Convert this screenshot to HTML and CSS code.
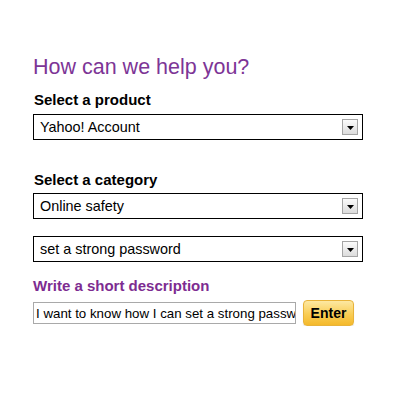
FILE: index.html
```html
<!DOCTYPE html>
<html lang="en">
<head>
<meta charset="utf-8">
<title>How can we help you?</title>
<link rel="stylesheet" href="styles.css">
</head>
<body>
<main class="help">
  <h1 class="title">How can we help you?</h1>

  <h2 class="label">Select a product</h2>
  <div class="select">
    <span class="select-value">Yahoo! Account</span>
    <span class="select-btn"><svg width="7" height="4" viewBox="0 0 7 4"><path d="M0 0h7L3.5 4z" fill="#000"/></svg></span>
  </div>

  <h2 class="label label-gap">Select a category</h2>
  <div class="select">
    <span class="select-value">Online safety</span>
    <span class="select-btn"><svg width="7" height="4" viewBox="0 0 7 4"><path d="M0 0h7L3.5 4z" fill="#000"/></svg></span>
  </div>
  <div class="select select-gap">
    <span class="select-value">set a strong password</span>
    <span class="select-btn"><svg width="7" height="4" viewBox="0 0 7 4"><path d="M0 0h7L3.5 4z" fill="#000"/></svg></span>
  </div>

  <h2 class="label label-purple">Write a short description</h2>
  <div class="desc-row">
    <input class="desc-input" type="text" value="I want to know how I can set a strong password">
    <button class="enter" type="button">Enter</button>
  </div>
</main>
</body>
</html>
```

FILE: styles.css
```css
html, body {
  margin: 0;
  padding: 0;
  background: #fff;
}

body {
  font-family: "Liberation Sans", Arial, sans-serif;
  color: #000;
}

.help {
  display: flex;
  flex-direction: column;
  align-items: flex-start;
  padding: 55px 0 0 33px;
}

.title {
  margin: 0;
  font-size: 21.5px;
  line-height: 25px;
  font-weight: normal;
  color: #7d3596;
}

.label {
  margin: 11px 0 5px 1px;
  font-size: 15px;
  line-height: 18px;
  font-weight: bold;
}

.label-gap {
  margin-top: 31px;
  margin-bottom: 4px;
}

.label-purple {
  margin: 15px 0 5px 0;
  color: #7d2c91;
}

.select {
  box-sizing: border-box;
  width: 330px;
  height: 26px;
  border: 1px solid #000;
  display: flex;
  align-items: center;
  justify-content: space-between;
  padding: 0 4px 0 6px;
  background: #fff;
}

.select-gap {
  margin-top: 17px;
}

.select-value {
  font-size: 14.4px;
  line-height: 18px;
}

.select-btn {
  box-sizing: border-box;
  width: 16px;
  height: 16px;
  border: 1px solid #a5a5a5;
  background: linear-gradient(#fbfbfb, #dcdcdc);
  display: flex;
  align-items: center;
  justify-content: center;
  padding-top: 1px;
}

.select-btn svg {
  display: block;
}

.desc-row {
  display: flex;
  align-items: center;
  gap: 7px;
}

.desc-input {
  box-sizing: border-box;
  width: 263px;
  height: 22px;
  margin: 0;
  border: 1px solid #a9a9a9;
  padding: 0 0 0 2px;
  background: #fff;
  font-family: "Liberation Sans", Arial, sans-serif;
  font-size: 13.3px;
  color: #000;
  outline: none;
}

.enter {
  box-sizing: border-box;
  width: 51px;
  height: 26px;
  border: 1px solid #e8b33a;
  border-radius: 4px;
  background: linear-gradient(#fde8a2, #f9cd55 55%, #f4b92b);
  font-family: "Liberation Sans", Arial, sans-serif;
  font-size: 14px;
  font-weight: bold;
  color: #000;
  padding: 0;
  box-shadow: 0 1px 1px rgba(0,0,0,0.12);
}
```
